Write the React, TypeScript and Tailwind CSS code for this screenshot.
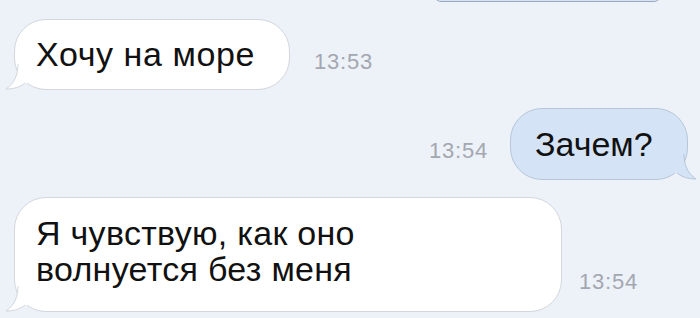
import React from "react";

const font = { fontFamily: '"Liberation Sans", Arial, sans-serif' };

function LeftTail() {
  return (
    <svg className="absolute left-[-10px] bottom-[-1px]" width="26" height="26" viewBox="0 0 26 26">
      <path d="M13 0 C13 10 10 19 1 25 C9 25 15 23 20 19 L26 19 L26 0 Z" fill="#ffffff" />
      <path d="M13 0 C13 10 10 19 1 25 C9 25 15 23 20 19" fill="none" stroke="#d3d7dd" strokeWidth="1" />
    </svg>
  );
}

function RightTail() {
  return (
    <svg className="absolute right-[-10px] bottom-[-1px]" width="26" height="26" viewBox="0 0 26 26">
      <path d="M13 0 C13 10 16 19 25 25 C17 25 11 23 6 19 L0 19 L0 0 Z" fill="#d5e3f6" />
      <path d="M13 0 C13 10 16 19 25 25 C17 25 11 23 6 19" fill="none" stroke="#b7c6da" strokeWidth="1" />
    </svg>
  );
}

export default function App() {
  return (
    <div className="relative w-[700px] h-[318px] overflow-hidden bg-[#edf1f8] flex flex-col" style={font}>
      <div className="flex justify-end pr-[40px]">
        <div className="w-[225px] h-[10px] -mt-[8px] rounded-b-[6px] bg-[#d5e3f6] border-b border-[#9aa8ba]" />
      </div>

      <div className="flex items-center mt-[17px] pl-[14px]">
        <div className="relative w-[276px] h-[71px] pl-[21px] flex items-center rounded-[32px] bg-white border border-[#d3d7dd]">
          <LeftTail />
          <span className="relative text-[34px] tracking-[0.6px] text-[#111]">Хочу на море</span>
        </div>
        <span className="ml-[24px] mt-[14px] text-[22px] tracking-[0.8px] text-[#a3a8b0]">13:53</span>
      </div>

      <div className="flex items-center justify-end mt-[18px] pr-[12px]">
        <span className="mr-[22px] mt-[12px] text-[22px] tracking-[0.8px] text-[#a3a8b0]">13:54</span>
        <div className="relative w-[178px] h-[72px] pl-[24px] flex items-center rounded-[32px] bg-[#d5e3f6] border border-[#b7c6da]">
          <RightTail />
          <span className="relative text-[34px] text-[#111]">Зачем?</span>
        </div>
      </div>

      <div className="flex items-end mt-[17px] pl-[14px]">
        <div className="relative w-[548px] h-[115px] pl-[21px] pt-[17px] rounded-[32px] bg-white border border-[#d3d7dd]">
          <LeftTail />
          <div className="relative text-[34px] leading-[36px] tracking-[0.3px] text-[#111]">
            Я чувствую, как оно
            <br />
            волнуется без меня
          </div>
        </div>
        <span className="ml-[17px] mb-[14px] text-[22px] tracking-[0.8px] text-[#a3a8b0]">13:54</span>
      </div>
    </div>
  );
}
